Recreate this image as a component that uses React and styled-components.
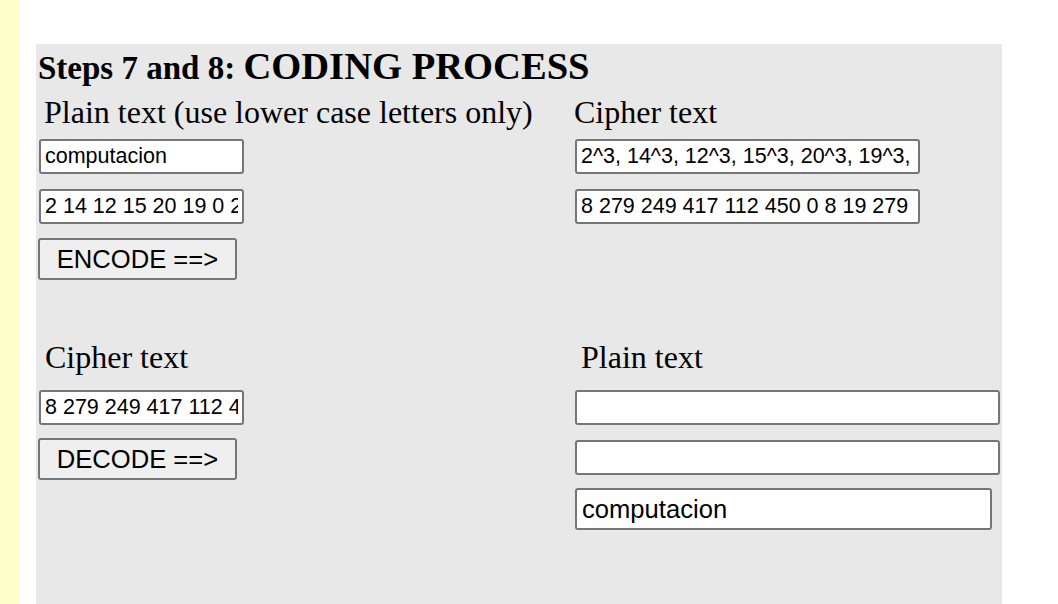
import React from "react";
import styled, { createGlobalStyle } from "styled-components";

const cipherValues = "8 279 249 417 112 450 0 8 19 279 225";

const App = () => {
  return (
    <>
      <GlobalStyle />
      <Page>
        <Strip />
        <Panel>
          <Heading>
            Steps 7 and 8: <Big>CODING PROCESS</Big>
          </Heading>

          <Section>
            <Column>
              <Label $indent={6} $top={4}>Plain text (use lower case letters only)</Label>
              <Field $top={8} $left={1} $width={205} readOnly value="computacion" />
              <Field $top={15} $left={1} $width={205} readOnly value="2 14 12 15 20 19 0 2 8 14 13" />
              <Action $top={14}>ENCODE ==&gt;</Action>
            </Column>
            <Column>
              <Label $indent={-1} $top={4}>Cipher text</Label>
              <Field $top={8} $width={345} readOnly value="2^3, 14^3, 12^3, 15^3, 20^3, 19^3, 0^3, 2^3, 8^3, 14^3, 13^3" />
              <Field $top={15} $width={345} readOnly value={cipherValues} />
            </Column>
          </Section>

          <Section $top={59}>
            <Column>
              <Label $indent={7}>Cipher text</Label>
              <Field $top={14} $left={1} $width={205} readOnly value={cipherValues} />
              <Action $top={13}>DECODE ==&gt;</Action>
            </Column>
            <Column>
              <Label $indent={6}>Plain text</Label>
              <Field $top={14} $width={425} readOnly value="" />
              <Field $top={15} $width={425} readOnly value="" />
              <Field $top={13} $width={417} $big readOnly value="computacion" />
            </Column>
          </Section>
        </Panel>
      </Page>
    </>
  );
};

export default App;

const GlobalStyle = createGlobalStyle`
  body {
    margin: 0;
    background: #ffffff;
    font-family: "Liberation Serif", "Times New Roman", serif;
    color: #000000;
  }
`;

const Page = styled.div`
  display: flex;
  align-items: flex-start;
  min-height: 604px;
`;

const Strip = styled.div`
  width: 20px;
  min-height: 604px;
  background: #ffffcc;
  flex-shrink: 0;
`;

const Panel = styled.div`
  width: 964px;
  min-height: 560px;
  margin-left: 16px;
  margin-top: 44px;
  padding-left: 2px;
  background: #e8e8e8;
`;

const Heading = styled.h2`
  margin: 0;
  font-size: 33px;
  font-weight: 700;
  line-height: 44px;
  white-space: nowrap;
`;

const Big = styled.span`
  font-size: 38.6px;
`;

const Section = styled.div`
  display: grid;
  grid-template-columns: 537px 1fr;
  margin-top: ${p => p.$top || 0}px;
`;

const Column = styled.div`
  display: flex;
  flex-direction: column;
  align-items: flex-start;
`;

const Label = styled.div`
  font-size: 32px;
  line-height: 37px;
  padding-left: ${p => Math.max(p.$indent, 0)}px;
  margin-left: ${p => Math.min(p.$indent, 0)}px;
  margin-top: ${p => p.$top || 0}px;
  white-space: nowrap;
`;

const Field = styled.input`
  box-sizing: border-box;
  width: ${p => p.$width}px;
  height: ${p => (p.$big ? 42 : 35)}px;
  margin: ${p => p.$top}px 0 0 ${p => p.$left || 0}px;
  padding: 0 4px 0 ${p => (p.$big ? 5 : 4)}px;
  border: 2px solid #767676;
  border-radius: 3px;
  background: #ffffff;
  color: #000000;
  font-family: "Liberation Sans", Arial, sans-serif;
  font-size: ${p => (p.$big ? 25.6 : 21.5)}px;
  outline: none;
`;

const Action = styled.button`
  box-sizing: border-box;
  width: 199px;
  height: 42px;
  margin-top: ${p => p.$top}px;
  padding: 0 6px;
  border: 2px solid #767676;
  border-radius: 3px;
  background: #efefef;
  color: #000000;
  font-family: "Liberation Sans", Arial, sans-serif;
  font-size: 25.6px;
  text-align: center;
  cursor: pointer;
`;
